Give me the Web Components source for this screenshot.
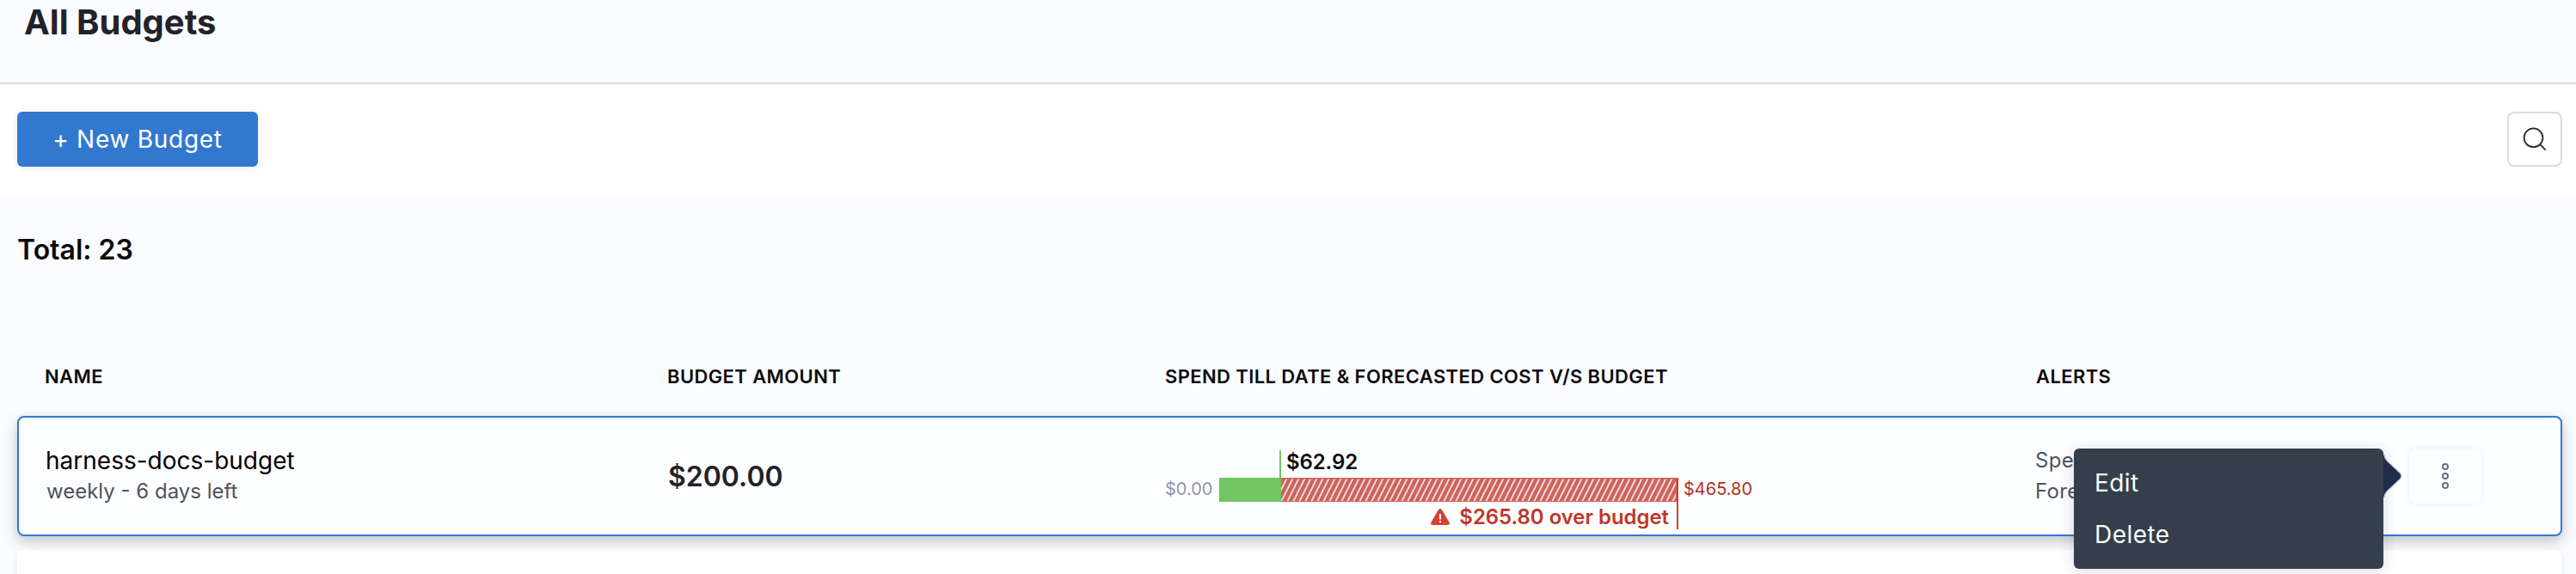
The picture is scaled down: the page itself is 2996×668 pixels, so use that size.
<!DOCTYPE html>
<html lang="en">
<head>
<meta charset="utf-8">
<title>All Budgets</title>
<style>
html, body { margin: 0; height: 668px; overflow: hidden; }
body { font-family: Inter, "Liberation Sans", sans-serif; background: #fbfcff; }
</style>
</head>
<body>
<budget-page></budget-page>
<script>
const define = (name, html) => {
  const tpl = document.createElement('template');
  tpl.innerHTML = html;
  customElements.define(name, class extends HTMLElement {
    constructor() {
      super();
      this.attachShadow({ mode: 'open' }).appendChild(tpl.content.cloneNode(true));
    }
  });
};

define('page-header', `
<style>
:host { display: block; box-sizing: border-box; height: 98px; padding-left: 28px; border-bottom: 2px solid #d9dae5; background: #fbfcff; }
h1 { margin: 0; font-size: 40px; line-height: 52px; font-weight: 700; color: #22222a; }
</style>
<h1><slot></slot></h1>`);

define('primary-button', `
<style>
:host { display: block; }
button { display: block; width: 280px; height: 64px; padding: 0; border: 0; border-radius: 6px; background: #3278cf; color: #fff; font: 400 28px/64px Inter, sans-serif; letter-spacing: .72px; box-shadow: 0 1px 8px rgba(96,97,112,.16); }
</style>
<button><slot></slot></button>`);

define('search-button', `
<style>
:host { display: flex; box-sizing: border-box; width: 64px; height: 64px; border: 2px solid #d9dae5; border-radius: 8px; background: #fff; }
svg { display: block; width: 60px; height: 60px; }
</style>
<svg viewBox="0 0 60 60" fill="none" stroke="#2b2c38" stroke-width="1.8" stroke-linecap="round"><circle cx="28.500" cy="28.300" r="10.900"/><path d="M36.200 36.200l6 6"/></svg>`);

define('page-toolbar', `
<style>
:host { display: flex; box-sizing: border-box; height: 128px; padding: 0 16px 0 20px; align-items: center; justify-content: space-between; background: #fff; }
</style>
<slot></slot>`);

define('total-count', `
<style>
:host { display: block; box-sizing: border-box; height: 176px; padding: 45px 0 0 20px; font-size: 32px; line-height: 40px; font-weight: 600; color: #0b0b0d; }
</style>
<slot></slot>`);

define('table-head', `
<style>
:host { display: grid; grid-template-columns: 724px 579px 1013px 1fr; box-sizing: border-box; height: 82px; margin: 0 16px 0 20px; padding: 20px 0 0 32px; font-size: 22px; line-height: 32px; font-weight: 600; letter-spacing: .39px; color: #0b0b0d; }
</style>
<slot></slot>`);

define('budget-row', `
<style>
:host { display: grid; grid-template-columns: 724px 578px 1012px 435px 1fr; box-sizing: border-box; height: 140px; margin: 0 16px 16px 20px; padding-left: 31px; border: 2px solid #3278cf; border-radius: 8px; background: #fdfeff; box-shadow: 0 0 4px rgba(40,41,61,.04), 0 6px 16px rgba(96,97,112,.36); }
</style>
<slot></slot>`);

define('next-row', `
<style>
:host { display: block; height: 140px; margin: 0 16px 0 20px; border-radius: 8px; background: #fff; box-shadow: 0 3px 6px rgba(96,97,112,.14); }
</style>`);

define('budget-name', `
<style>
:host { display: block; padding-top: 32px; }
.name { font-size: 28px; line-height: 36px; color: #000; }
.sub { padding-left: 1px; font-size: 24px; line-height: 36px; color: #4f5162; }
</style>
<div class="name"><slot name="name"></slot></div>
<div class="sub"><slot></slot></div>`);

define('budget-amount', `
<style>
:host { display: block; padding-top: 49px; font-size: 32px; line-height: 40px; font-weight: 600; color: #22222a; }
</style>
<slot></slot>`);

define('spend-bar', `
<style>
:host { display: grid; grid-template-columns: 63px 72px 462px auto; grid-template-rows: 32px 28px 32px; align-content: start; justify-content: start; padding-top: 38px; }
.spent { grid-column: 3; grid-row: 1; margin-left: -2px; border-left: 2px solid #71c562; padding-left: 6px; font-size: 24px; line-height: 27px; font-weight: 600; color: #0b0b0d; letter-spacing: -.1px; }
.end { font-size: 20px; line-height: 26px; grid-row: 2; }
.min { grid-column: 1; color: #9293ab; }
.max { grid-column: 4; color: #b02f23; padding-left: 6px; }
.used { grid-column: 2; grid-row: 2; background: #71c562; }
.forecast { grid-column: 3; grid-row: 2; border-right: 2px solid #cf4331; }
.forecast svg { display: block; width: 460px; height: 28px; }
.over { grid-column: 1 / 4; grid-row: 3; display: flex; justify-content: flex-end; border-right: 2px solid #cf4331; padding-right: 9px; font-size: 24px; line-height: 36px; font-weight: 600; color: #bf3727; letter-spacing: -.05px; }
.over svg { width: 22px; height: 20px; margin: 8px 11px 0 0; }
</style>
<div class="spent"><slot name="spent"></slot></div>
<div class="end min"><slot name="min"></slot></div>
<div class="used"></div>
<div class="forecast"><svg viewBox="0 0 460 28">
<defs><pattern id="hatch" width="7" height="14" patternUnits="userSpaceOnUse"><path d="M-1 16L8 -2M-8 16L1 -2M6 16L15 -2" stroke="#e4e2ee" stroke-width="1.9"/></pattern></defs>
<rect width="460" height="28" fill="#d36257"/><rect y="1.500" width="459" height="25.500" fill="url(#hatch)"/></svg></div>
<div class="end max"><slot name="max"></slot></div>
<div class="over"><svg viewBox="0 0 22 20"><path d="M8.700 1.700Q11-1.500 13.300 1.700L21.400 15.400Q23 19 19.200 19H2.800Q-1 19 .6 15.400Z" fill="#cf4331"/><path d="M11 6v6.500M11 14.300v2" stroke="#fff" stroke-width="2"/></svg><slot></slot></div>`);

define('alert-list', `
<style>
:host { display: block; padding-top: 32px; font-size: 24px; line-height: 36px; letter-spacing: .3px; color: #4f5162; white-space: nowrap; }
</style>
<slot></slot>`);

define('options-menu', `
<style>
:host { display: block; position: relative; padding-top: 36px; }
.trigger { display: flex; flex-direction: column; align-items: center; justify-content: center; gap: 3px; width: 84px; height: 64px; border-radius: 8px; background: #fdfeff; box-shadow: 0 0 7px rgba(96,97,112,.11); }
.trigger i { box-sizing: border-box; width: 8px; height: 8px; border: 2px solid #6b6d85; border-radius: 50%; }
.menu { position: absolute; left: -390px; top: 36px; box-sizing: border-box; width: 360px; height: 140px; padding: 10px 24px; border-radius: 6px; background: #343f4b; color: #fbfcff; font-size: 28px; line-height: 60px; letter-spacing: .45px; box-shadow: 0 2px 16px rgba(40,41,61,.18); }
.menu svg { position: absolute; left: 360px; top: 4px; width: 26px; height: 56px; overflow: visible; }
</style>
<div class="trigger"><i></i><i></i><i></i></div>
<div class="menu"><slot></slot><svg viewBox="0 0 26 56"><path d="M0 3Q1 8 4 11L18.500 24.500Q22 28 18.500 31.500L4 45Q1 48 0 53Z" fill="#1f2d49" stroke="#b9bcc8" stroke-width="2.400" paint-order="stroke"/><path d="M-4 0H0V56H-4Z" fill="#343f4b"/></svg></div>`);

define('menu-item', `
<style>:host { display: block; }</style>
<slot></slot>`);

define('budget-page', `
<style>
:host { display: block; height: 668px; overflow: hidden; background: #fbfcff; }
</style>
<page-header>All Budgets</page-header>
<page-toolbar><primary-button>+ New Budget</primary-button><search-button></search-button></page-toolbar>
<total-count>Total: 23</total-count>
<table-head><span>NAME</span><span>BUDGET AMOUNT</span><span>SPEND TILL DATE &amp; FORECASTED COST V/S BUDGET</span><span>ALERTS</span></table-head>
<budget-row>
<budget-name><span slot="name">harness-docs-budget</span>weekly - 6 days left</budget-name>
<budget-amount>$200.00</budget-amount>
<spend-bar><span slot="spent">$62.92</span><span slot="min">$0.00</span><span slot="max">$465.80</span>$265.80 over budget</spend-bar>
<alert-list><div>Spe</div><div>Fore</div></alert-list>
<options-menu><menu-item>Edit</menu-item><menu-item>Delete</menu-item></options-menu>
</budget-row>
<next-row></next-row>`);
</script>
</body>
</html>
